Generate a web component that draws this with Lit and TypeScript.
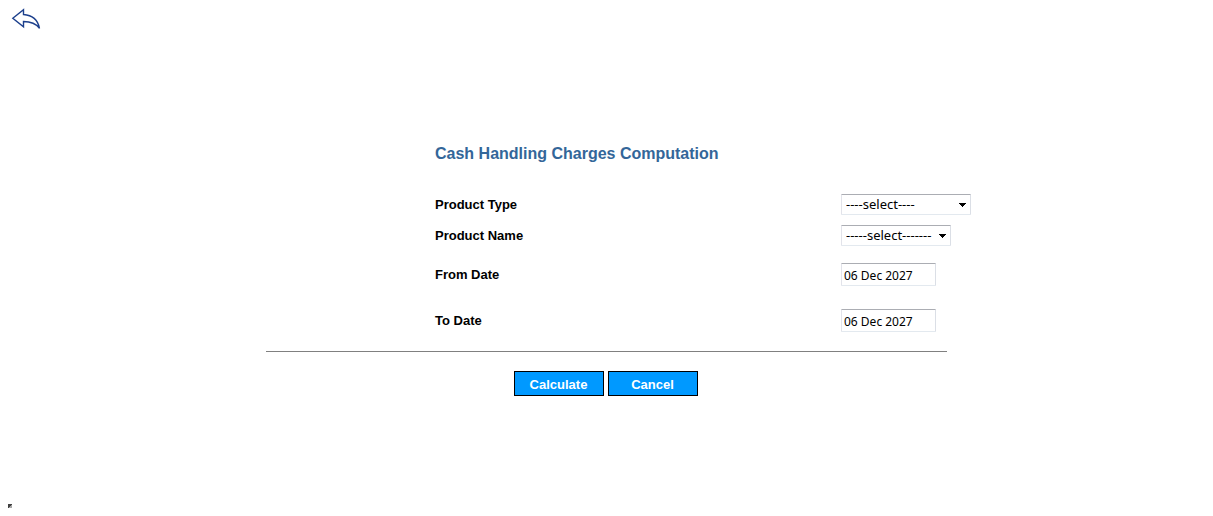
import { LitElement, html, css } from "lit";
import { customElement } from "lit/decorators.js";

@customElement("app-root")
class AppRoot extends LitElement {
  static styles = css`
    :host {
      display: flex;
      flex-direction: column;
      box-sizing: border-box;
      min-height: 100vh;
      padding: 8px;
      background: #fff;
      color: #000;
      font-family: "Liberation Sans", Arial, sans-serif;
      font-size: 13px;
    }
    .back {
      align-self: flex-start;
      display: block;
      padding: 0 3px;
    }
    .back svg {
      display: block;
    }
    .panel {
      width: 100%;
      max-width: 681px;
      margin: 114px auto 0;
    }
    .form {
      padding-left: 169px;
    }
    h1 {
      margin: 0 0 30px;
      color: #336699;
      font-size: 16px;
      line-height: 20px;
      white-space: nowrap;
    }
    .row {
      display: grid;
      grid-template-columns: 406px max-content;
      align-items: center;
    }
    .row + .row {
      margin-top: 10px;
    }
    .row + .date {
      margin-top: 17px;
    }
    .date + .date {
      margin-top: 23px;
    }
    .row label {
      font-weight: bold;
      line-height: 20px;
    }
    select,
    input {
      display: block;
      box-sizing: border-box;
      margin: 0;
      border: 1px solid;
      border-color: #abadb3 #dbdfe6 #e3e9ef #e2e3ea;
      border-radius: 1px;
      background: #fff;
      color: #000;
      font-family: "Noto Sans", sans-serif;
    }
    .pick {
      position: relative;
    }
    select {
      appearance: none;
      height: 21px;
      padding: 0 4px 2px;
      font-size: 13px;
    }
    .wide {
      width: 130px;
    }
    .narrow {
      width: 110px;
    }
    .arrow {
      position: absolute;
      top: 9px;
      right: 4px;
      pointer-events: none;
    }
    input {
      width: 95px;
      height: 23px;
      padding: 1px 2px 0;
      font-size: 12px;
    }
    hr {
      margin: 19px 0;
      border: 0;
      border-top: 1px solid #808080;
    }
    .actions {
      display: flex;
      justify-content: center;
      gap: 4px;
      padding-right: 2px;
    }
    button {
      width: 90px;
      height: 25px;
      padding: 2px 0 0;
      border: 1px solid #000;
      border-radius: 0;
      background: #0099ff;
      color: #fff;
      font: bold 13px "Liberation Sans", Arial, sans-serif;
    }
    .mark {
      display: block;
      margin-top: auto;
    }
  `;

  private arrow() {
    return html`<svg class="arrow" width="8" height="5" viewBox="0 0 8 5" shape-rendering="crispEdges" aria-hidden="true">
      <path d="M0 0H7V1H6V2H5V3H4V4H3V3H2V2H1V1H0Z" />
    </svg>`;
  }

  render() {
    return html`
      <a class="back" href="#" aria-label="Back">
        <svg width="32" height="22" viewBox="11 8 32 22" fill="none" stroke="#1c3f8c" stroke-width="1.4">
          <path d="M12.8 18.300L23.500 9.700V14.500C31.500 15 37.500 18.500 39.500 28.300C36 23.500 31 21.500 23.500 21.500V26.800Z" />
        </svg>
      </a>
      <main class="panel">
        <form class="form" id="charges" @submit=${(e: Event) => e.preventDefault()}>
          <h1>Cash Handling Charges Computation</h1>
          <div class="row">
            <label for="type">Product Type</label>
            <div class="pick">
              <select id="type" class="wide"><option>----select----</option></select>${this.arrow()}
            </div>
          </div>
          <div class="row">
            <label for="name">Product Name</label>
            <div class="pick">
              <select id="name" class="narrow"><option>-----select-------</option></select>${this.arrow()}
            </div>
          </div>
          <div class="row date">
            <label for="from">From Date</label>
            <input id="from" type="text" value="06 Dec 2027" />
          </div>
          <div class="row date">
            <label for="to">To Date</label>
            <input id="to" type="text" value="06 Dec 2027" />
          </div>
        </form>
        <hr />
        <div class="actions">
          <button type="submit" form="charges">Calculate</button>
          <button type="button">Cancel</button>
        </div>
      </main>
      <svg class="mark" width="4" height="4" viewBox="0 0 4 4" shape-rendering="crispEdges" aria-hidden="true">
        <path d="M0 0H4V4H0Z" fill="#a8a8a8" />
        <path d="M0 0H4V1H3V2H2V3H1V4H0Z" fill="#404040" />
      </svg>
    `;
  }
}
